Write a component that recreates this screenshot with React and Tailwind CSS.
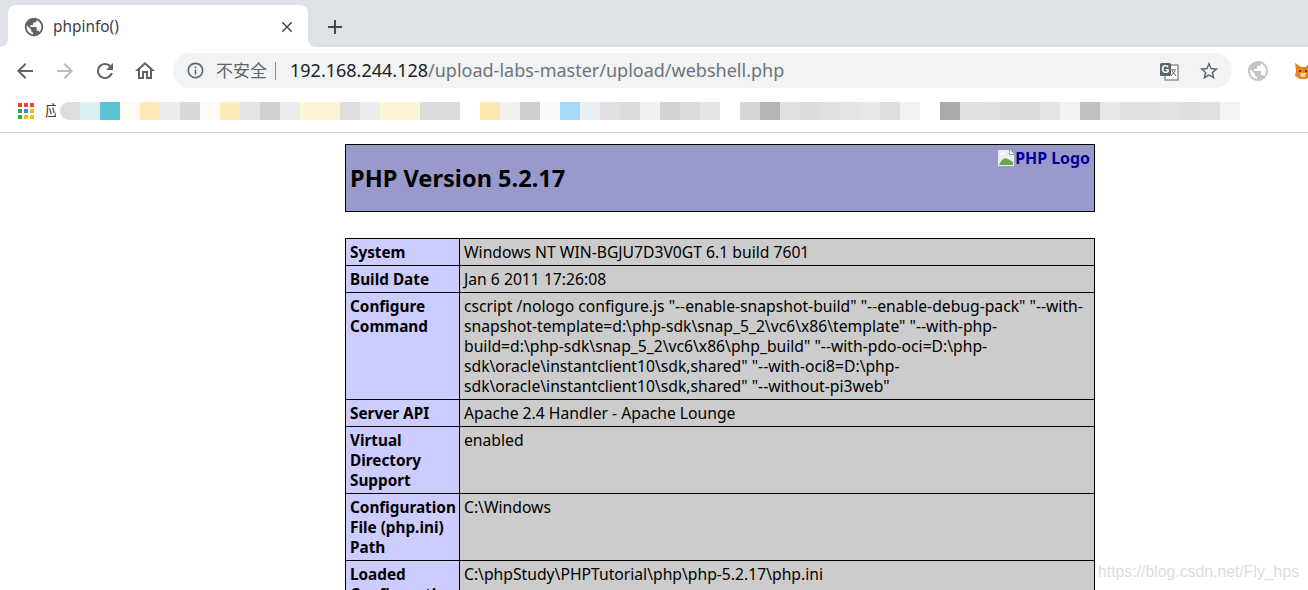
import React from "react";

const ICONS = {
  globe: "M12 2C6.48 2 2 6.48 2 12s4.48 10 10 10 10-4.48 10-10S17.52 2 12 2zm-1 17.93c-3.95-.49-7-3.85-7-7.93 0-.62.08-1.21.21-1.79L9 15v1c0 1.1.9 2 2 2v1.93zm6.9-2.54c-.26-.81-1-1.39-1.9-1.39h-1v-3c0-.55-.45-1-1-1H8v-2h2c.55 0 1-.45 1-1V7h2c1.1 0 2-.9 2-2v-.41c2.93 1.19 5 4.06 5 7.41 0 2.08-.8 3.97-2.1 5.39z",
  back: "M20 11H7.83l5.59-5.59L12 4l-8 8 8 8 1.41-1.41L7.83 13H20v-2z",
  forward: "M4 11h12.17l-5.59-5.59L12 4l8 8-8 8-1.41-1.41L16.17 13H4v-2z",
  reload: "M17.65 6.35C16.2 4.9 14.21 4 12 4c-4.42 0-7.99 3.58-7.99 8s3.57 8 7.99 8c3.73 0 6.84-2.55 7.73-6h-2.08c-.82 2.33-3.04 4-5.65 4-3.31 0-6-2.69-6-6s2.69-6 6-6c1.66 0 3.14.69 4.22 1.78L13 11h7V4l-2.35 2.35z",
  home: "M12 5.69l5 4.5V18h-2v-6H9v6H7v-7.81l5-4.5M12 3L2 12h3v8h6v-6h2v6h6v-8h3L12 3z",
  info: "M11 7h2v2h-2zm0 4h2v6h-2zm1-9C6.48 2 2 6.48 2 12s4.48 10 10 10 10-4.48 10-10S17.52 2 12 2zm0 18c-4.41 0-8-3.59-8-8s3.59-8 8-8 8 3.59 8 8-3.59 8-8 8z",
  star: "M22 9.24l-7.19-.62L12 2 9.19 8.63 2 9.24l5.46 4.73L5.82 21 12 17.27 18.18 21l-1.63-7.03L22 9.24zM12 15.4l-3.76 2.27 1-4.28-3.32-2.88 4.38-.38L12 6.1l1.71 4.04 4.38.38-3.32 2.88 1 4.28L12 15.4z",
  close: "M19 6.41L17.59 5 12 10.59 6.41 5 5 6.41 10.59 12 5 17.59 6.41 19 12 13.41 17.59 19 19 17.59 13.41 12z",
  plus: "M19 13h-6v6h-2v-6H5v-2h6V5h2v6h6v2z",
};

const Icon = ({ name, className }) => (
  <svg viewBox="0 0 24 24" className={className} fill="currentColor">
    <path d={ICONS[name]} />
  </svg>
);

// pixelated bookmark bar, one 20px tile each
const bookmarkTiles = [
  "#dcdddd", "#daf0f4", "#5ac4d6", "#fffbf2", "#fde9b8", "#ebebeb", "#d8d8d8", "#fffbf2", "#fdeab9", "#e4e4e4",
  "#d0d0d0", "#ebebeb", "#fef3d2", "#fef3d2", "#dedede", "#ececec", "#fef3d2", "#fef3d2", "#dcdcdc", "#dcdcdc",
  "#ffffff", "#fde9b0", "#f0f0ee", "#cfcdcd", "#f8f9fb", "#a6d9f8", "#e8eff3", "#e0e0e0", "#d9dbdc",
  "#f0f0ec", "#d0d2d6", "#dcdcdc", "#e4e5e6", "#ffffff", "#d6d6d6", "#b5b5b5", "#e0e0e0", "#dcdcdc", "#e0e0e0",
  "#e4e4e4", "#e8e8e8", "#dedede", "#f2f2f2", "#ffffff", "#aaaaaa", "#dfdfdc", "#e0e0e0", "#dcdcdc", "#dcdcdc", "#e4e4e4",
  "#f2f2f2", "#bfc0c2", "#e8e8e8", "#e0e0e0", "#e0e0e0", "#e2e2e2", "#dedede", "#e0e0e0", "#f2f4f4",
];

const appDots = [
  "#ea4335", "#ea4335", "#ea4335",
  "#34a853", "#4285f4", "#fbbc04",
  "#34a853", "#fbbc04", "#fbbc04",
];

const rows = [
  { name: ["System"], value: ["Windows NT WIN-BGJU7D3V0GT 6.1 build 7601"] },
  { name: ["Build Date"], value: ["Jan 6 2011 17:26:08"] },
  {
    name: ["Configure", "Command"],
    value: [
      'cscript /nologo configure.js "--enable-snapshot-build" "--enable-debug-pack" "--with-',
      'snapshot-template=d:\\php-sdk\\snap_5_2\\vc6\\x86\\template" "--with-php-',
      'build=d:\\php-sdk\\snap_5_2\\vc6\\x86\\php_build" "--with-pdo-oci=D:\\php-',
      'sdk\\oracle\\instantclient10\\sdk,shared" "--with-oci8=D:\\php-',
      'sdk\\oracle\\instantclient10\\sdk,shared" "--without-pi3web"',
    ],
  },
  { name: ["Server API"], value: ["Apache 2.4 Handler - Apache Lounge"] },
  { name: ["Virtual", "Directory", "Support"], value: ["enabled"] },
  { name: ["Configuration", "File (php.ini)", "Path"], value: ["C:\\Windows"] },
  { name: ["Loaded", "Configuration", "File"], value: ["C:\\phpStudy\\PHPTutorial\\php\\php-5.2.17\\php.ini"] },
];

const Lines = ({ lines }) =>
  lines.map((line, i) => (
    <div key={i} className="whitespace-nowrap">
      {line}
    </div>
  ));

const TabStrip = () => (
  <div className="h-[47px] bg-[#dee1e6] pt-[5px] pl-2 flex items-start">
    <div className="relative w-[300px] h-[42px] bg-white rounded-t-lg flex items-center pl-[15px] pr-3 pt-[2px]">
      <svg viewBox="0 0 8 8" className="absolute -left-2 bottom-0 w-2 h-2 text-white" fill="currentColor">
        <path d="M8 0v8H0c4.5 0 8-3.5 8-8z" />
      </svg>
      <svg viewBox="0 0 8 8" className="absolute -right-2 bottom-0 w-2 h-2 text-white" fill="currentColor">
        <path d="M0 0v8h8C3.500 8 0 4.500 0 0z" />
      </svg>
      <Icon name="globe" className="w-[22px] h-[22px] text-[#5f6368]" />
      <span className="ml-[8px] text-[15.400px] text-[#3c4043] font-['Noto_Sans',sans-serif]">phpinfo()</span>
      <Icon name="close" className="ml-auto w-[18px] h-[18px] text-[#45484c]" />
    </div>
    <Icon name="plus" className="ml-[15px] mt-[10px] w-6 h-6 text-[#45484c]" />
  </div>
);

const Toolbar = () => (
  <div className="h-[47px] flex items-center font-['Noto_Sans','Noto_Sans_CJK_SC',sans-serif]">
    <Icon name="back" className="ml-[13px] w-6 h-6 text-[#5f6368] shrink-0" />
    <Icon name="forward" className="ml-4 w-6 h-6 text-[#b9bcc0] shrink-0" />
    <Icon name="reload" className="ml-4 w-6 h-6 text-[#5f6368] shrink-0" />
    <Icon name="home" className="ml-4 w-6 h-6 text-[#5f6368] shrink-0" />
    <div className="ml-4 w-[1059px] shrink-0 h-[35px] rounded-full bg-[#f1f3f4] flex items-center pl-[13px] pr-[12px]">
      <Icon name="info" className="w-[19px] h-[19px] text-[#5f6368]" />
      <span className="ml-[11px] text-[17px] text-[#5f6368]">不安全</span>
      <span className="ml-[8px] w-px h-[18px] bg-[#8a8d91]" />
      <span className="ml-[14px] text-[18px] whitespace-nowrap text-[#202124]">
        192.168.244.128<span className="text-[#6f7378]">/upload-labs-master/upload/webshell.php</span>
      </span>
      <svg viewBox="0 0 20 20" className="ml-auto w-[20px] h-[20px]">
        <rect x="6" y="4" width="13" height="15" fill="#fff" stroke="#5f6368" />
        <path d="M11 9h6M14 8v1M12 15l4-5M13 10l4 5" stroke="#5f6368" fill="none" />
        <rect x="1" y="2" width="11" height="13" rx="1.500" fill="#5f6368" />
        <text x="6.500" y="12" fontSize="10" fontWeight="700" fill="#fff" textAnchor="middle" fontFamily="Liberation Sans, sans-serif">G</text>
      </svg>
      <Icon name="star" className="ml-[19px] w-[22px] h-[22px] text-[#5f6368]" />
    </div>
    <Icon name="globe" className="ml-[14px] w-[24px] h-[24px] text-[#c4c6c8] shrink-0" />
    <svg viewBox="0 0 20 20" className="ml-[23px] w-[20px] h-[20px] shrink-0">
      <path d="M2 2l6 4h4l6-4-1 8 1 5-5 3H7l-5-3 1-5z" fill="#e8821e" />
      <path d="M7 12h6l-1 4H8z" fill="#f5d5b0" />
      <circle cx="7" cy="10" r="1" fill="#33251a" />
      <circle cx="13" cy="10" r="1" fill="#33251a" />
    </svg>
  </div>
);

const BookmarkBar = () => (
  <div className="h-[39px] border-b border-[#cfcfcf] flex items-center pb-[5px]">
    <div className="ml-[18px] w-[16px] grid grid-cols-3 gap-[2px]">
      {appDots.map((color, i) => (
        <span key={i} className="w-1 h-1" style={{ backgroundColor: color }} />
      ))}
    </div>
    <span className="ml-[11px] w-[11px] overflow-hidden text-[15px] text-[#3c4043] font-['Noto_Sans_CJK_SC',sans-serif]">应</span>
    <div className="ml-[4px] flex h-[18px] rounded-l-full overflow-hidden">
      {bookmarkTiles.map((color, i) => (
        <span key={i} className="w-5 h-full" style={{ backgroundColor: color }} />
      ))}
    </div>
  </div>
);

const BrokenImage = () => (
  <svg viewBox="0 0 18 18" className="w-[18px] h-[18px] shrink-0 mt-px">
    <path d="M.5.500h12l5 5v12H.5z" fill="#e8eefb" stroke="#a0a0a0" />
    <path d="M12.500.500v5h5" fill="#fff" stroke="#a0a0a0" />
    <path d="M2 16c2-5 6-8 9-6l5 3v3z" fill="#6aa84f" />
    <path d="M3 5c1-2 3-2 4-1 2 0 2 2 0 2H3z" fill="#fff" />
  </svg>
);

const App = () => (
  <div className="relative h-[590px] w-[1308px] overflow-hidden bg-white">
    <TabStrip />
    <Toolbar />
    <BookmarkBar />

    <div className="w-[750px] ml-[345px] mt-[11px] text-[15.700px] leading-5 text-black font-['Noto_Sans',sans-serif]">
      <div className="h-[68px] border border-black bg-[#9999cc] relative flex items-center pl-1">
        <h1 className="text-[23.600px] font-bold leading-8">PHP Version 5.2.17</h1>
        <div className="absolute right-1 top-[3px] flex items-start">
          <BrokenImage />
          <span className="font-bold text-[15.900px] text-[#000099]">PHP Logo</span>
        </div>
      </div>

      <table className="mt-[26px] w-full border-collapse table-fixed">
        <tbody>
          {rows.map((row) => (
            <tr key={row.name.join(" ")}>
              <td className="w-[114px] border border-black bg-[#ccccff] px-1 py-[3px] align-top text-[15.300px] font-bold">
                <Lines lines={row.name} />
              </td>
              <td className="border border-black bg-[#cccccc] px-1 py-[3px] align-top">
                <Lines lines={row.value} />
              </td>
            </tr>
          ))}
        </tbody>
      </table>
    </div>

    <span className="absolute left-[1098px] top-[562px] text-[15.800px] leading-5 text-[#dddddd] font-['Liberation_Sans',sans-serif]">
      https://blog.csdn.net/Fly_hps
    </span>
  </div>
);

export default App;
